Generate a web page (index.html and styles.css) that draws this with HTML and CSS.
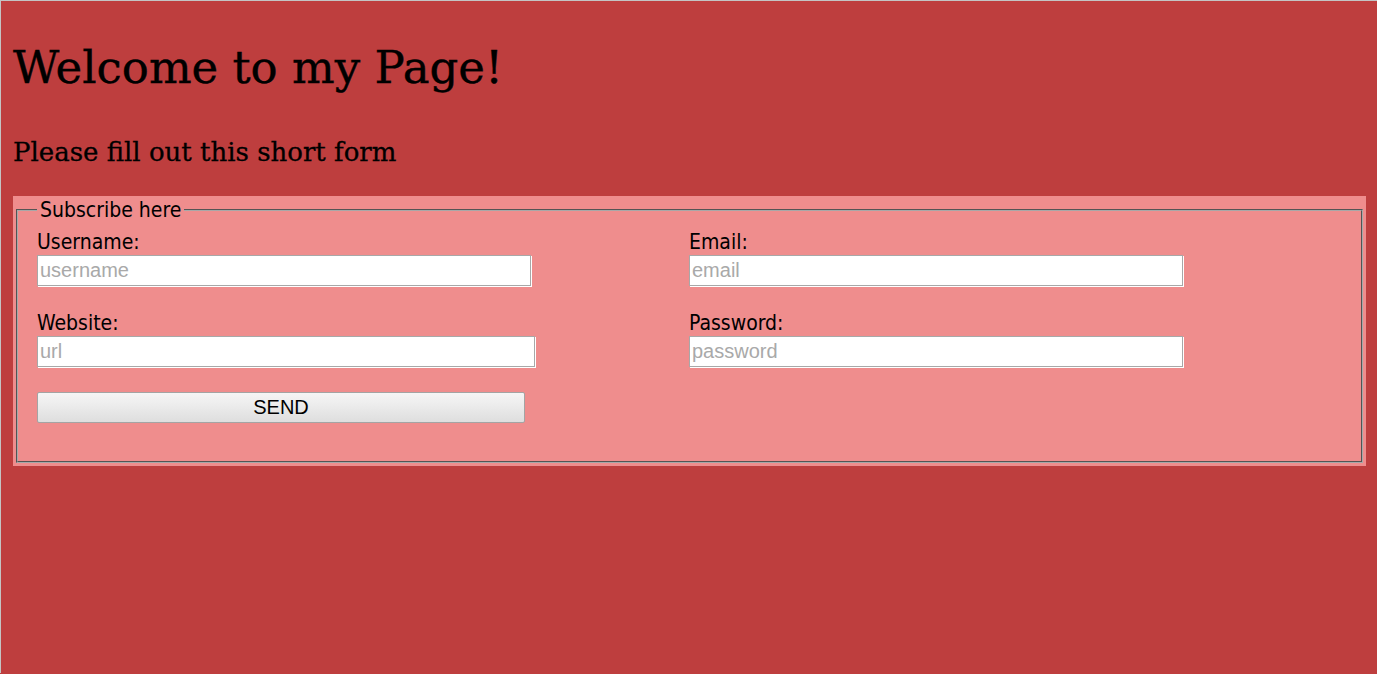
FILE: index.html
```html
<!DOCTYPE html>
<html lang="en">
<head>
<meta charset="utf-8">
<title>Welcome to my Page!</title>
<link rel="stylesheet" href="styles.css">
</head>
<body>
<div class="page">
  <h1 class="title">Welcome to my Page!</h1>
  <h2 class="subtitle">Please fill out this short form</h2>
  <form class="signup" onsubmit="return false">
    <fieldset class="box">
      <legend class="box-legend">Subscribe here</legend>
      <div class="grid">
        <div class="field">
          <label class="label" for="username">Username:</label>
          <input class="input" id="username" type="text" placeholder="username">
        </div>
        <div class="field">
          <label class="label" for="email">Email:</label>
          <input class="input" id="email" type="email" placeholder="email">
        </div>
        <div class="field">
          <label class="label" for="url">Website:</label>
          <input class="input input-wide" id="url" type="url" placeholder="url">
        </div>
        <div class="field">
          <label class="label" for="password">Password:</label>
          <input class="input" id="password" type="password" placeholder="password">
        </div>
        <div class="field">
          <button class="send" type="submit">SEND</button>
        </div>
      </div>
    </fieldset>
  </form>
</div>
</body>
</html>
```
FILE: styles.css
```css
html {
  background: #be3e3e;
}
body {
  margin: 0;
  background: #be3e3e;
}
.page {
  min-height: 673px;
  box-sizing: border-box;
  border-top: 1px solid #c4c4c4;
  border-left: 1px solid #c4c4c4;
  padding: 0 11px 0 12px;
}
.title {
  margin: 0;
  padding-top: 39px;
  font-family: "DejaVu Serif", serif;
  font-size: 45px;
  font-weight: normal;
  line-height: 56px;
  color: #000;
  -webkit-text-stroke: 0.4px #000;
}
.subtitle {
  margin: 40px 0 0;
  font-family: "DejaVu Serif", serif;
  font-size: 26px;
  font-weight: normal;
  line-height: 32px;
  color: #000;
  -webkit-text-stroke: 0.3px #000;
}
.signup {
  margin-top: 28px;
  padding: 3px;
  background: #ef8d8d;
}
.box {
  margin: 0;
  padding: 0 18px 38px 19px;
  border: 2px groove #a8a8a8;
  min-width: 0;
}
.box-legend {
  padding: 0 3px;
  font-family: "DejaVu Sans Condensed", "DejaVu Sans", sans-serif;
  font-stretch: condensed;
  font-size: 21px;
  line-height: 22px;
  color: #000;
}
.grid {
  display: grid;
  grid-template-columns: 652px 1fr;
  row-gap: 25px;
  padding-top: 9px;
}
.field {
  display: flex;
  flex-direction: column;
  align-items: flex-start;
}
.label {
  font-family: "DejaVu Sans Condensed", "DejaVu Sans", sans-serif;
  font-stretch: condensed;
  font-size: 21px;
  line-height: 25px;
  color: #000;
}
.input {
  box-sizing: border-box;
  width: 494px;
  height: 31px;
  margin: 0;
  padding: 0 2px;
  border: 1px solid #a8a8a8;
  box-shadow: 1px 1px 0 #fff;
  background: #fff;
  font-family: "Liberation Sans", Arial, sans-serif;
  font-size: 20px;
  color: #000;
  outline: none;
}
.input-wide {
  width: 498px;
}
.input::placeholder {
  color: #a9a9a9;
}
.send {
  box-sizing: border-box;
  width: 488px;
  height: 31px;
  margin: 0;
  padding: 0;
  border: 1px solid #a4a4a4;
  border-radius: 2px;
  background: linear-gradient(#f6f6f6, #dedede);
  font-family: "Liberation Sans", Arial, sans-serif;
  font-size: 20px;
  color: #000;
}
```
